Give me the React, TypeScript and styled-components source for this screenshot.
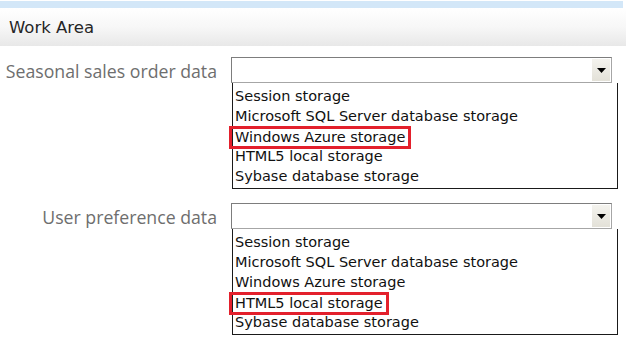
import React from 'react';
import styled, {createGlobalStyle} from "styled-components";

const GlobalStyle = createGlobalStyle`
  body {
    margin: 0;
    background: #ffffff;
  }
`

type FieldPropsType = {
    label: string;
    options: string[];
    marked: string;
}

const storageOptions = [
    "Session storage",
    "Microsoft SQL Server database storage",
    "Windows Azure storage",
    "HTML5 local storage",
    "Sybase database storage",
];

const Field = (props: FieldPropsType) => {
    return (
        <Row>
            <Label>{props.label}</Label>
            <FieldColumn>
                <SelectBox>
                    <ArrowButton>
                        <svg width="9" height="5" viewBox="0 0 9 5">
                            <path d="M0 0h9L4.5 5z" fill="#000"/>
                        </svg>
                    </ArrowButton>
                </SelectBox>
                <OptionList>
                    {props.options.map(option => (
                        <Option key={option}>
                            {option === props.marked
                                ? <Marked>{option}</Marked>
                                : option}
                        </Option>
                    ))}
                </OptionList>
            </FieldColumn>
        </Row>
    );
};

export default function App() {
    return (
        <Page>
            <GlobalStyle/>
            <TopBand/>
            <Header>Work Area</Header>
            <Content>
                <Field label="Seasonal sales order data" options={storageOptions} marked="Windows Azure storage"/>
                <Field label="User preference data" options={storageOptions} marked="HTML5 local storage"/>
            </Content>
        </Page>
    );
}

const Page = styled.div`
  width: 626px;
  height: 343px;
  overflow: hidden;
  padding-top: 1px;
  box-sizing: border-box;
`

const TopBand = styled.div`
  height: 7px;
  margin-right: 3px;
  background: #d3e7f8;
`

const Header = styled.div`
  height: 38px;
  display: flex;
  align-items: center;
  padding-left: 9px;
  background: linear-gradient(#ffffff, #f7f7f7 50%, #e8e8e8);
  font-family: "DejaVu Sans", Verdana, sans-serif;
  font-size: 16.5px;
  color: #262626;
`

const Content = styled.div`
  display: flex;
  flex-direction: column;
  gap: 14px;
  padding-top: 11px;
`

const Row = styled.div`
  display: flex;
  align-items: flex-start;
`

const Label = styled.div`
  width: 231px;
  box-sizing: border-box;
  padding-right: 14px;
  text-align: right;
  line-height: 28px;
  font-family: "Open Sans", sans-serif;
  font-size: 17.7px;
  color: #6e6e6e;
  white-space: nowrap;
`

const FieldColumn = styled.div`
  display: flex;
  flex-direction: column;
  width: 387px;
`

const SelectBox = styled.div`
  width: 381px;
  height: 26px;
  box-sizing: border-box;
  border: 1px solid #a6a6a6;
  border-top-color: #7d7d7d;
  border-left-color: #7d7d7d;
  background: #ffffff;
  display: flex;
  justify-content: flex-end;
  padding: 1px;
`

const ArrowButton = styled.div`
  width: 18px;
  display: flex;
  align-items: center;
  justify-content: center;
  background: linear-gradient(#f4f3ee, #e3e1d8);
`

const OptionList = styled.div`
  margin-left: 1px;
  border: 1px solid #1a1a1a;
  border-top: none;
  padding: 3px 0 2px;
  background: #ffffff;
`

const Option = styled.div`
  height: 20px;
  line-height: 20px;
  padding-left: 2px;
  font-family: "DejaVu Sans", Tahoma, sans-serif;
  font-size: 14.5px;
  color: #111111;
  white-space: nowrap;
`

const Marked = styled.span`
  display: inline-block;
  margin-left: -6px;
  padding: 0 3px 0 3px;
  line-height: 17px;
  border: 3px solid #e3202c;
`
